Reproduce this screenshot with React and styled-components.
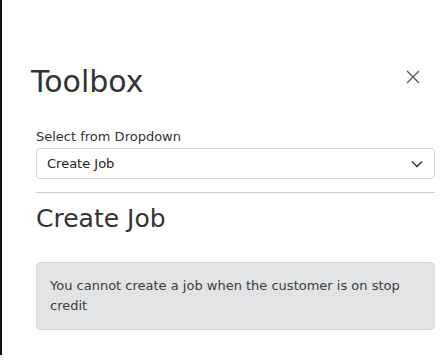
import styled, { createGlobalStyle } from "styled-components";

const Global = createGlobalStyle`
  html, body { margin: 0; padding: 0; background: #fff; }
  body { font-family: "DejaVu Sans", "Liberation Sans", sans-serif; color: #333; }
`;

function App() {
  return (
    <Panel>
      <Global />
      <Header>
        <Title>Toolbox</Title>
        <Close aria-label="close">
          <svg width="14" height="14" viewBox="0 0 14 14">
            <path d="M1 1L13 13M13 1L1 13" stroke="#555" strokeWidth="1.3" fill="none" />
          </svg>
        </Close>
      </Header>
      <Body>
        <Label>Select from Dropdown</Label>
        <Select>
          <span>Create Job</span>
          <svg width="12" height="8" viewBox="0 0 12 8">
            <path d="M1 1.5L6 6.5L11 1.5" stroke="#444" strokeWidth="1.6" fill="none" />
          </svg>
        </Select>
        <Rule />
        <Heading>Create Job</Heading>
        <Alert>You cannot create a job when the customer is on stop credit</Alert>
      </Body>
    </Panel>
  );
}

const Panel = styled.div`
  height: 355px;
  border-left: 2px solid #111;
  box-sizing: border-box;
`;

const Header = styled.div`
  display: flex;
  align-items: center;
  justify-content: space-between;
  padding: 64px 20px 0 29px;
`;

const Title = styled.h1`
  margin: 0;
  font-size: 30px;
  font-weight: 400;
  line-height: 36px;
  color: #333;
`;

const Close = styled.button`
  border: none;
  background: none;
  padding: 0;
  width: 14px;
  height: 14px;
  display: flex;
  margin-top: -10px;
`;

const Body = styled.div`
  padding: 0 5px 0 34px;
`;

const Label = styled.div`
  margin-top: 28px;
  font-size: 13px;
  line-height: 18px;
  color: #333;
`;

const Select = styled.div`
  margin-top: 2px;
  height: 31px;
  box-sizing: border-box;
  border: 1px solid #d6d6d6;
  border-radius: 4px;
  display: flex;
  align-items: center;
  justify-content: space-between;
  padding: 0 11px 0 10px;
  font-size: 13px;
  color: #222;
`;

const Rule = styled.hr`
  margin: 13px 0 0;
  border: none;
  border-top: 1px solid #ccc;
`;

const Heading = styled.h2`
  margin: 10px 0 0;
  font-size: 25px;
  font-weight: 400;
  line-height: 32px;
  color: #333;
`;

const Alert = styled.div`
  margin-top: 27px;
  background: #e2e3e5;
  border: 1px solid #d6d8db;
  border-radius: 4px;
  padding: 13px 13px 13px;
  font-size: 13px;
  line-height: 20px;
  color: #383d41;
`;

export default App;
